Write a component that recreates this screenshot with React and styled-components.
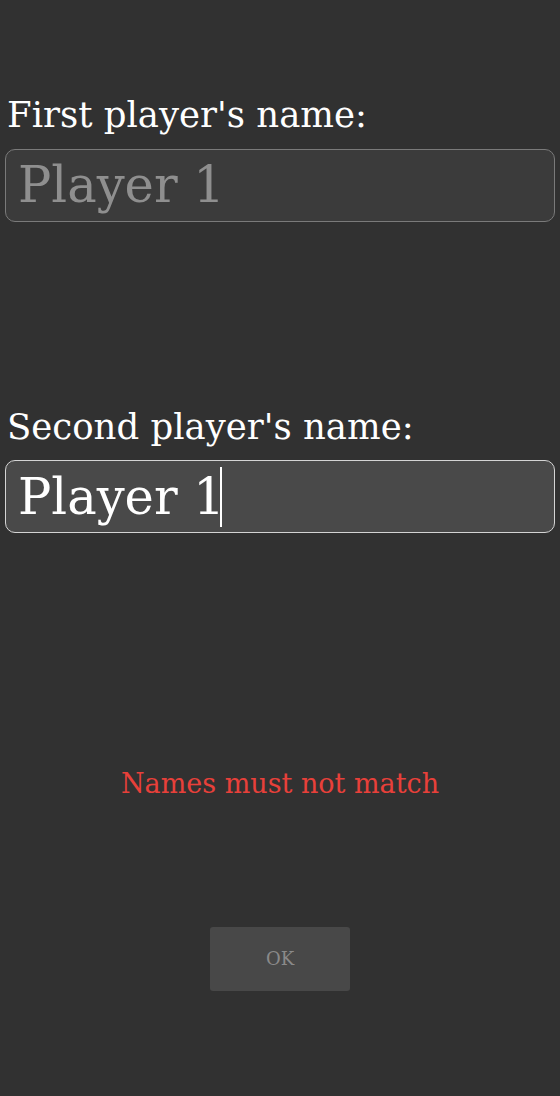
import React from 'react';
import styled, { createGlobalStyle } from 'styled-components';

const GlobalStyle = createGlobalStyle`
  html, body {
    margin: 0;
    padding: 0;
    background: #313131;
  }
  body {
    font-family: "DejaVu Serif", "Liberation Serif", serif;
  }
`;

const Page = styled.div`
  display: flex;
  flex-direction: column;
  height: 1096px;
  padding: 94px 5px 0;
  box-sizing: border-box;
`;

const Field = styled.div`
  display: flex;
  flex-direction: column;
  gap: 12px;
  margin-bottom: ${(p) => p.$after}px;
`;

const Label = styled.label`
  color: #ffffff;
  font-size: 35.5px;
  line-height: 1.2;
  padding-left: 2px;
`;

const NameInput = styled.input`
  box-sizing: border-box;
  width: 100%;
  height: 73px;
  padding: 0 12px;
  border-radius: 10px;
  border: 1px solid #7a7a7a;
  background: #3b3b3b;
  color: #ffffff;
  font-family: inherit;
  font-size: 49.5px;
  outline: none;

  &::placeholder {
    color: #8f8f8f;
  }
`;

const ActiveBox = styled.div`
  box-sizing: border-box;
  display: flex;
  align-items: center;
  width: 100%;
  height: 73px;
  padding: 0 12px;
  border-radius: 10px;
  border: 1px solid #d4d4d4;
  background: #494949;
  color: #ffffff;
  font-size: 49.5px;
`;

const Caret = styled.span`
  display: inline-block;
  width: 2px;
  height: 60px;
  margin-left: -5px;
  background: #ffffff;
`;

const ErrorText = styled.p`
  margin: 0;
  text-align: center;
  color: #e8403a;
  font-size: 27px;
  line-height: 1.2;
`;

const OkButton = styled.button`
  align-self: center;
  width: 140px;
  height: 64px;
  margin-top: 126px;
  border: none;
  border-radius: 3px;
  background: #484848;
  color: #8a8a8a;
  font-family: inherit;
  font-size: 18px;
`;

export default function App() {
  return (
    <>
      <GlobalStyle />
      <Page>
        <Field $after={184}>
          <Label>First player's name:</Label>
          <NameInput placeholder="Player 1" />
        </Field>
        <Field $after={235}>
          <Label>Second player's name:</Label>
          <ActiveBox role="textbox">
            <span>Player 1</span>
            <Caret />
          </ActiveBox>
        </Field>
        <ErrorText>Names must not match</ErrorText>
        <OkButton disabled>OK</OkButton>
      </Page>
    </>
  );
}
